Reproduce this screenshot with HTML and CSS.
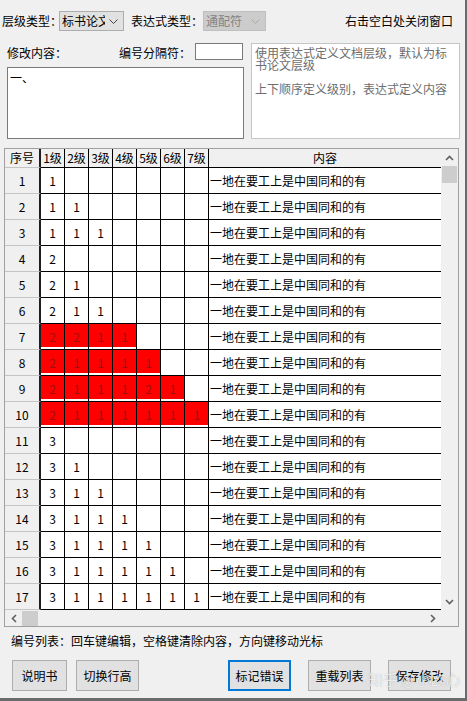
FILE: index.html
```html
<!DOCTYPE html>
<html lang="zh-CN">
<head>
<meta charset="utf-8">
<title>编号层级</title>
<link rel="stylesheet" href="styles.css">
</head>
<body>
<div class="window">
  <div class="toprow">
    <span class="lbl lbl-type">层级类型：</span>
    <div class="combo c1">
      <span class="combo-text">标书论文</span>
      <svg class="chev" width="9" height="5" viewBox="0 0 9 5"><path d="M0.5 0.5 L4.5 4.5 L8.5 0.5" fill="none" stroke="#404040" stroke-width="1"/></svg>
    </div>
    <span class="lbl lbl-expr">表达式类型：</span>
    <div class="combo c2">
      <span class="combo-text">通配符</span>
      <svg class="chev" width="9" height="5" viewBox="0 0 9 5"><path d="M0.5 0.5 L4.5 4.5 L8.5 0.5" fill="none" stroke="#a8a8a8" stroke-width="1"/></svg>
    </div>
    <span class="close-hint">右击空白处关闭窗口</span>
  </div>

  <div class="editrow">
    <div class="editleft">
      <div class="editline">
        <span class="lbl lbl-edit">修改内容：</span>
        <span class="lbl lbl-sep">编号分隔符：</span>
        <div class="input"></div>
      </div>
      <div class="textarea">一、</div>
    </div>
    <div class="hint">
      <p>使用表达式定义文档层级，默认为标书论文层级</p>
      <p class="p2">上下顺序定义级别，表达式定义内容</p>
    </div>
  </div>

  <div class="grid">
    <div class="viewport">
      <div class="row head">
        <div class="c rh">序号</div>
        <div class="c hd">1级</div>
        <div class="c hd">2级</div>
        <div class="c hd">3级</div>
        <div class="c hd">4级</div>
        <div class="c hd">5级</div>
        <div class="c hd">6级</div>
        <div class="c hd">7级</div>
        <div class="c hd content">内容</div>
      </div>
      <div class="row"><div class="c rh">1</div><div class="c">1</div><div class="c"></div><div class="c"></div><div class="c"></div><div class="c"></div><div class="c"></div><div class="c"></div><div class="c txt">一地在要工上是中国同和的有</div></div>
      <div class="row"><div class="c rh">2</div><div class="c">1</div><div class="c">1</div><div class="c"></div><div class="c"></div><div class="c"></div><div class="c"></div><div class="c"></div><div class="c txt">一地在要工上是中国同和的有</div></div>
      <div class="row"><div class="c rh">3</div><div class="c">1</div><div class="c">1</div><div class="c">1</div><div class="c"></div><div class="c"></div><div class="c"></div><div class="c"></div><div class="c txt">一地在要工上是中国同和的有</div></div>
      <div class="row"><div class="c rh">4</div><div class="c">2</div><div class="c"></div><div class="c"></div><div class="c"></div><div class="c"></div><div class="c"></div><div class="c"></div><div class="c txt">一地在要工上是中国同和的有</div></div>
      <div class="row"><div class="c rh">5</div><div class="c">2</div><div class="c">1</div><div class="c"></div><div class="c"></div><div class="c"></div><div class="c"></div><div class="c"></div><div class="c txt">一地在要工上是中国同和的有</div></div>
      <div class="row"><div class="c rh">6</div><div class="c">2</div><div class="c">1</div><div class="c">1</div><div class="c"></div><div class="c"></div><div class="c"></div><div class="c"></div><div class="c txt">一地在要工上是中国同和的有</div></div>
      <div class="row"><div class="c rh">7</div><div class="c red">2</div><div class="c red">2</div><div class="c red">1</div><div class="c red">1</div><div class="c"></div><div class="c"></div><div class="c"></div><div class="c txt">一地在要工上是中国同和的有</div></div>
      <div class="row"><div class="c rh">8</div><div class="c red">2</div><div class="c red">1</div><div class="c red">1</div><div class="c red">1</div><div class="c red">1</div><div class="c"></div><div class="c"></div><div class="c txt">一地在要工上是中国同和的有</div></div>
      <div class="row"><div class="c rh">9</div><div class="c red">2</div><div class="c red">1</div><div class="c red">1</div><div class="c red">1</div><div class="c red">2</div><div class="c red">1</div><div class="c"></div><div class="c txt">一地在要工上是中国同和的有</div></div>
      <div class="row"><div class="c rh">10</div><div class="c red">2</div><div class="c red">1</div><div class="c red">1</div><div class="c red">1</div><div class="c red">1</div><div class="c red">1</div><div class="c red">1</div><div class="c txt">一地在要工上是中国同和的有</div></div>
      <div class="row"><div class="c rh">11</div><div class="c">3</div><div class="c"></div><div class="c"></div><div class="c"></div><div class="c"></div><div class="c"></div><div class="c"></div><div class="c txt">一地在要工上是中国同和的有</div></div>
      <div class="row"><div class="c rh">12</div><div class="c">3</div><div class="c">1</div><div class="c"></div><div class="c"></div><div class="c"></div><div class="c"></div><div class="c"></div><div class="c txt">一地在要工上是中国同和的有</div></div>
      <div class="row"><div class="c rh">13</div><div class="c">3</div><div class="c">1</div><div class="c">1</div><div class="c"></div><div class="c"></div><div class="c"></div><div class="c"></div><div class="c txt">一地在要工上是中国同和的有</div></div>
      <div class="row"><div class="c rh">14</div><div class="c">3</div><div class="c">1</div><div class="c">1</div><div class="c">1</div><div class="c"></div><div class="c"></div><div class="c"></div><div class="c txt">一地在要工上是中国同和的有</div></div>
      <div class="row"><div class="c rh">15</div><div class="c">3</div><div class="c">1</div><div class="c">1</div><div class="c">1</div><div class="c">1</div><div class="c"></div><div class="c"></div><div class="c txt">一地在要工上是中国同和的有</div></div>
      <div class="row"><div class="c rh">16</div><div class="c">3</div><div class="c">1</div><div class="c">1</div><div class="c">1</div><div class="c">1</div><div class="c">1</div><div class="c"></div><div class="c txt">一地在要工上是中国同和的有</div></div>
      <div class="row"><div class="c rh">17</div><div class="c">3</div><div class="c">1</div><div class="c">1</div><div class="c">1</div><div class="c">1</div><div class="c">1</div><div class="c">1</div><div class="c txt">一地在要工上是中国同和的有</div></div>
    </div>
    <div class="vscroll">
      <div class="varrow"><svg width="9" height="6" viewBox="0 0 9 6"><path d="M1 5 L4.5 1.5 L8 5" fill="none" stroke="#606060" stroke-width="1.6"/></svg></div>
      <div class="vtrack"><div class="vthumb"></div></div>
      <div class="varrow"><svg width="9" height="6" viewBox="0 0 9 6"><path d="M1 1 L4.5 4.5 L8 1" fill="none" stroke="#606060" stroke-width="1.6"/></svg></div>
    </div>
    <div class="hscroll">
      <div class="harrow"><svg width="6" height="9" viewBox="0 0 6 9"><path d="M5 1 L1.5 4.5 L5 8" fill="none" stroke="#606060" stroke-width="1.6"/></svg></div>
      <div class="hthumb"></div>
      <div class="htrack"></div>
      <div class="harrow"><svg width="6" height="9" viewBox="0 0 6 9"><path d="M1 1 L4.5 4.5 L1 8" fill="none" stroke="#606060" stroke-width="1.6"/></svg></div>
    </div>
    <div class="corner"></div>
  </div>

  <div class="status">编号列表：回车键编辑，空格键清除内容，方向键移动光标</div>

  <div class="buttons">
    <div class="btn b1">说明书</div>
    <div class="btn b2">切换行高</div>
    <div class="btn b3 focus">标记错误</div>
    <div class="btn b4">重载列表</div>
    <div class="btn b5">保存修改</div>
  </div>

  <span class="watermark">知乎 @小欧心</span>
</div>
</body>
</html>
```

FILE: styles.css
```css
html, body {
  margin: 0;
  padding: 0;
}

body {
  background: #f0f0f0;
  font-family: "Noto Sans CJK SC", "Noto Sans", "DejaVu Sans", sans-serif;
  font-size: 12px;
  color: #000;
}

.window {
  position: relative;
  width: 465px;
  height: 698px;
  border-right: 2px solid #6b6b6b;
  border-bottom: 3px solid #6b6b6b;
  overflow: hidden;
}

.lbl {
  white-space: nowrap;
  line-height: 14px;
}

/* top row */
.toprow {
  display: flex;
  align-items: center;
  height: 20px;
  margin-top: 11px;
  padding-left: 2px;
}

.lbl-type { width: 57px; }
.lbl-expr { width: 72px; }

.combo {
  box-sizing: border-box;
  height: 20px;
  border: 1px solid #adadad;
  background: #e1e1e1;
  display: flex;
  align-items: center;
  padding-left: 2px;
  overflow: hidden;
}

.combo-text {
  white-space: nowrap;
  line-height: 14px;
}

.c1 {
  width: 65px;
  margin-right: 7px;
}

.c1 .combo-text {
  width: 43px;
  overflow: hidden;
}

.c2 {
  width: 63px;
  background: #cccccc;
  border-color: #bfbfbf;
  color: #838383;
}

.chev {
  margin-left: auto;
  margin-right: 5px;
  flex: none;
}

.close-hint {
  margin-left: auto;
  margin-right: 12px;
  white-space: nowrap;
  line-height: 14px;
}

/* edit row */
.editrow {
  display: flex;
  margin-top: 12px;
  padding-left: 7px;
  height: 96px;
}

.editleft {
  width: 237px;
  display: flex;
  flex-direction: column;
}

.editline {
  display: flex;
  align-items: center;
  height: 17px;
}

.lbl-edit { width: 112px; margin-top: 2px; }
.lbl-sep { width: 76px; margin-top: 2px; }

.input {
  box-sizing: border-box;
  width: 48px;
  height: 17px;
  border: 1px solid #7a7a7a;
  background: #fff;
}

.textarea {
  box-sizing: border-box;
  margin-top: 7px;
  height: 72px;
  border: 1px solid #7a7a7a;
  background: #fff;
  padding: 2px 2px;
  line-height: 16px;
}

.hint {
  box-sizing: border-box;
  margin-left: 7px;
  width: 209px;
  height: 96px;
  border: 1px solid #c6c6c6;
  background: #fff;
  color: #6d6d6d;
  padding: 3px 0 0 3px;
  line-height: 12px;
}

.hint p {
  margin: 0;
  width: 194px;
}

.hint .p2 { margin-top: 12px; }

/* grid */
.grid {
  box-sizing: border-box;
  margin: 9px 0 0 4px;
  width: 455px;
  border: 1px solid #a0a0a0;
  display: grid;
  grid-template-columns: 436px 17px;
  grid-template-rows: 461px 16px;
  background: #fff;
}

.viewport {
  overflow: hidden;
}

.row {
  display: grid;
  grid-template-columns: 36px repeat(7, 24px) 232px;
  height: 26px;
}

.row.head { height: 19px; }

.c {
  box-sizing: border-box;
  border-right: 1px solid #000;
  border-bottom: 1px solid #000;
  display: flex;
  align-items: center;
  justify-content: center;
  white-space: nowrap;
  overflow: hidden;
  line-height: 14px;
}

.rh {
  background: #f0f0f0;
  border-right: 2px solid #1e1e1e;
  border-bottom-color: #c4c4c4;
}

.hd {
  background: #f0f0f0;
}

.hd.content,
.txt {
  border-right: none;
}

.txt {
  justify-content: flex-start;
  padding-left: 1px;
}

.red {
  background: #ff0000;
  color: #a01010;
  box-shadow: inset 0 -2px 0 #fff;
}

/* scrollbars */
.vscroll {
  background: #f0f0f0;
  display: flex;
  flex-direction: column;
}

.varrow {
  height: 17px;
  display: flex;
  align-items: center;
  justify-content: center;
  flex: none;
}

.vtrack {
  flex: 1;
}

.vthumb {
  margin-left: 1px;
  width: 15px;
  height: 17px;
  background: #cdcdcd;
}

.hscroll {
  background: #f0f0f0;
  display: flex;
  align-items: stretch;
}

.harrow {
  width: 17px;
  display: flex;
  align-items: center;
  justify-content: center;
  flex: none;
}

.hthumb {
  width: 16px;
  margin-top: 1px;
  height: 15px;
  background: #cdcdcd;
}

.htrack { flex: 1; }

.corner { background: #f0f0f0; }

/* status & buttons */
.status {
  margin-top: 7px;
  padding-left: 11px;
  line-height: 14px;
  white-space: nowrap;
}

.buttons {
  display: flex;
  margin-top: 12px;
  padding-left: 12px;
}

.btn {
  box-sizing: border-box;
  height: 31px;
  width: 63px;
  border: 1px solid #adadad;
  background: #e1e1e1;
  display: flex;
  align-items: center;
  justify-content: center;
  white-space: nowrap;
  line-height: 14px;
}

.b1 { width: 55px; }
.b2 { margin-left: 9px; }
.b3 { margin-left: 89px; }
.b4 { margin-left: 17px; }
.b5 { margin-left: 17px; }

.btn.focus {
  border: 2px solid #0078d7;
}

.watermark {
  position: absolute;
  left: 368px;
  top: 670px;
  font-size: 15px;
  line-height: 18px;
  color: rgba(255, 255, 255, 0.8);
  text-shadow: 0 0 1px rgba(0, 0, 0, 0.3);
  white-space: nowrap;
}
```
